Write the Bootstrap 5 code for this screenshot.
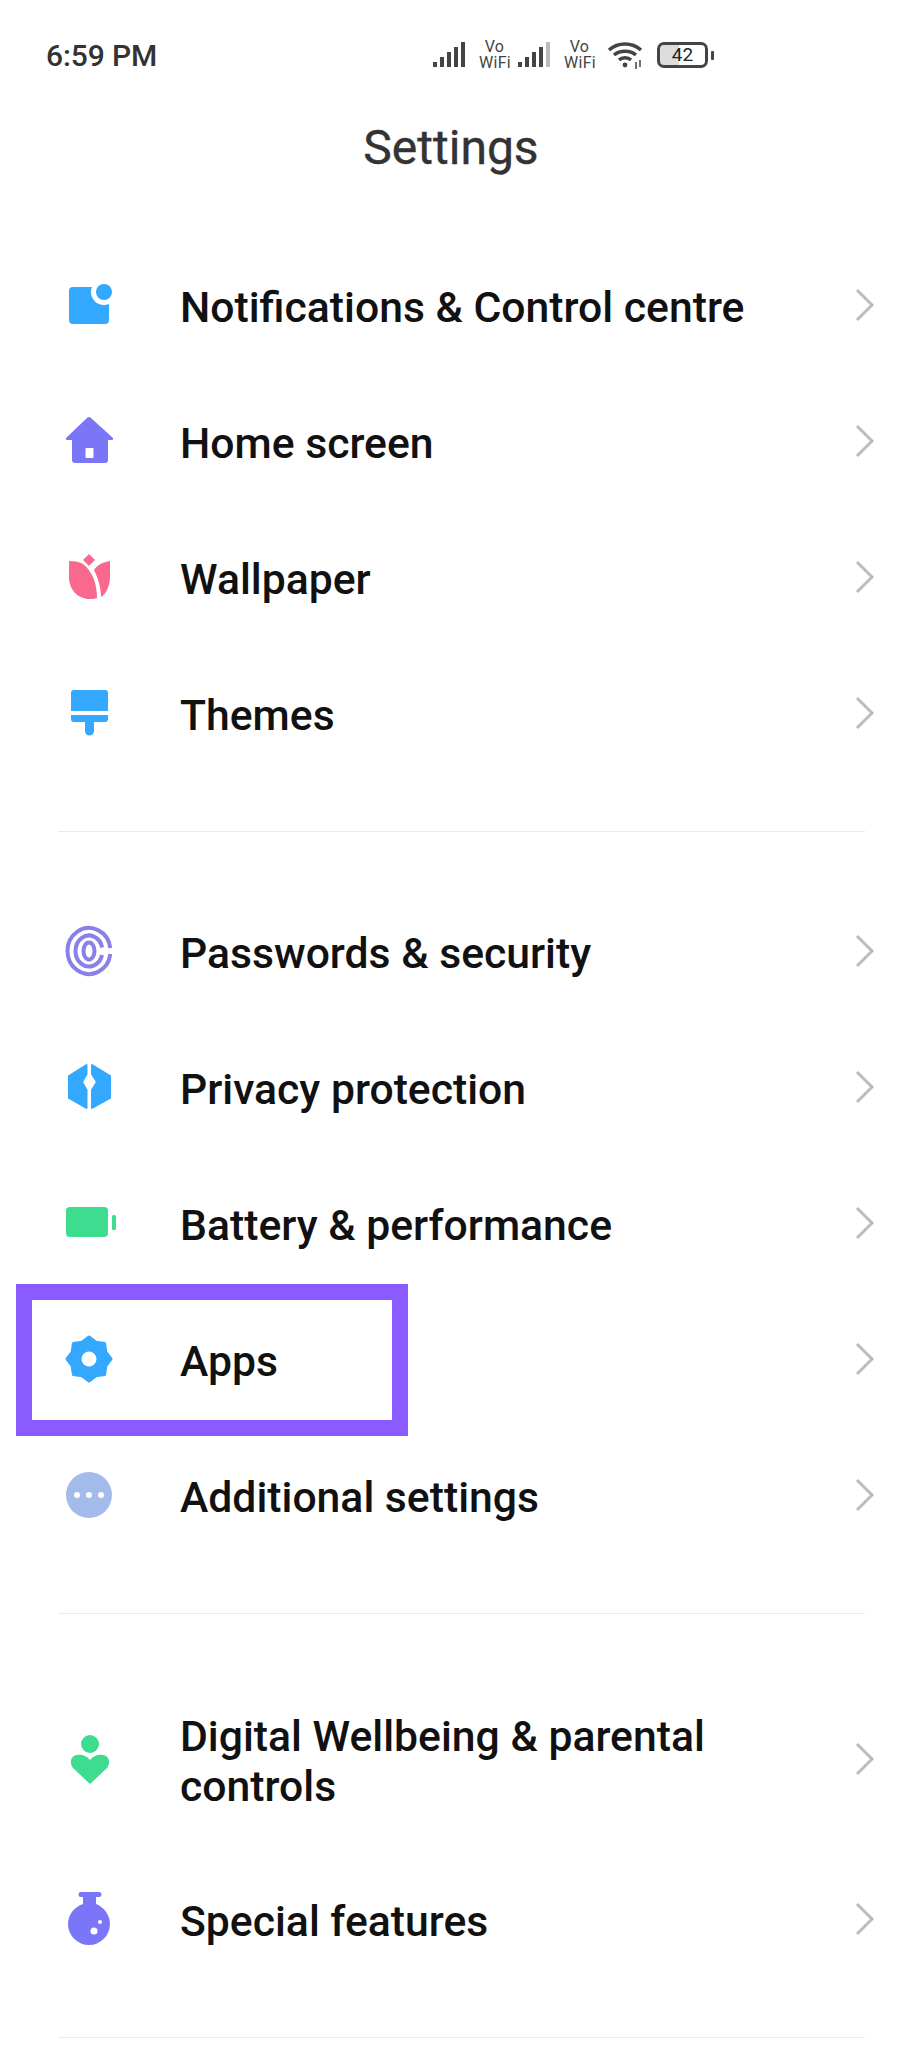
<!DOCTYPE html>
<html lang="en">
<head>
  <meta charset="UTF-8">
  <title>Settings</title>
  <link href="https://cdn.jsdelivr.net/npm/bootstrap@5.3.0/dist/css/bootstrap.min.css" rel="stylesheet">
  <style>
    html, body {
      height: 2048px;
      overflow: hidden;
    }
    body {
      background-color: #fff;
      font-family: Roboto, "Liberation Sans", sans-serif;
    }
    .status-strip {
      height: 110px;
      padding: 0 208px 0 46px;
      color: #333;
    }
    .clock {
      font-size: 30px;
      font-weight: 500;
      letter-spacing: -.1px;
    }
    .sig-bars {
      margin-right: 12px;
    }
    .vowifi {
      width: 31px;
      font-size: 16px;
      line-height: 16px;
      letter-spacing: .3px;
      text-align: center;
      color: #444;
    }
    .batt {
      width: 51px;
      height: 26px;
      border: 3px solid #444;
      border-radius: 7px;
      font-size: 19px;
      line-height: 20px;
      text-align: center;
      color: #222;
      background: linear-gradient(90deg, #ddd 42%, #fff 42%);
    }
    .batt-tip {
      width: 3px;
      height: 9px;
      background: #444;
      border-radius: 1px;
      margin-left: 3px;
    }
    .page-title {
      height: 76px;
      font-size: 48px;
      font-weight: 400;
      -webkit-text-stroke: .4px #333;
      line-height: 76px;
      color: #333;
      margin: 0;
    }
    .title-wrap {
      height: 129px;
      padding-right: 20px;
    }
    .set-row {
      display: flex;
      align-items: center;
      height: 136px;
      padding: 0 47px 0 59px;
      border: 0;
      background: transparent;
      font-size: 42.700px;
      font-weight: 500;
      line-height: 50px;
      color: #111;
    }
    .set-row.tall {
      height: 186px;
      padding-top: 2px;
    }
    .set-ico {
      width: 60px;
      height: 60px;
      flex: none;
      margin-right: 61px;
    }
    .set-label {
      flex: 1;
    }
    .chev {
      width: 20px;
      height: 34px;
      flex: none;
      margin-bottom: 4px;
    }
    .sect-rule {
      height: 1px;
      margin: 48px 57px 53px 58px;
      background: #eaeaea;
      border: 0;
      opacity: 1;
    }
    .apps-frame {
      position: absolute;
      left: 16px;
      top: -9px;
      width: 392px;
      height: 152px;
      border: 16px solid #8a5bff;
    }
  </style>
</head>
<body>
  <!-- status bar -->
  <div class="status-strip d-flex align-items-center justify-content-between">
    <span class="clock">6:59 PM</span>
    <div class="d-flex align-items-center">
      <svg class="sig-bars" width="34" height="26" viewBox="0 0 34 26" fill="#444"><rect x="0" y="20" width="4" height="5"/><rect x="7" y="15" width="4" height="10"/><rect x="14" y="10" width="4" height="15"/><rect x="21" y="5" width="4" height="20"/><rect x="28" y="0" width="4" height="25"/></svg>
      <div class="vowifi me-2">Vo<br>WiFi</div>
      <svg class="sig-bars" width="34" height="26" viewBox="0 0 34 26" fill="#444"><rect x="0" y="20" width="4" height="5"/><rect x="7" y="15" width="4" height="10"/><rect x="14" y="10" width="4" height="15"/><rect x="21" y="5" width="4" height="20"/><rect x="28" y="0" width="4" height="25" fill="#bbb"/></svg>
      <div class="vowifi me-2">Vo<br>WiFi</div>
      <svg class="ms-1 me-2" width="38" height="30" viewBox="0 0 38 30" fill="none" stroke="#444" stroke-width="3.4"><path d="M2 10 C11 2 25 2 34 10"/><path d="M7 15 C13 10 23 10 29 15"/><path d="M12 20 C15 17 21 17 24 20"/><circle cx="18" cy="25" r="2.4" fill="#444" stroke="none"/><path d="M29 22v7M33 20v7" stroke-width="1.5"/></svg>
      <div class="batt ms-1">42</div>
      <div class="batt-tip"></div>
    </div>
  </div>

  <div class="title-wrap text-center">
    <h1 class="page-title">Settings</h1>
  </div>

  <div class="list-group list-group-flush">
    <div class="list-group-item set-row">
      <svg class="set-ico" viewBox="0 0 60 60"><path d="M14 10H50V43a4 4 0 0 1-4 4H14a4 4 0 0 1-4-4V14a4 4 0 0 1 4-4Z" fill="#34a7fe"/><circle cx="45" cy="15" r="13" fill="#fff"/><circle cx="45" cy="15" r="8" fill="#34a7fe"/></svg>
      <span class="set-label">Notifications &amp; Control centre</span>
      <svg class="chev" viewBox="0 0 20 34"><path d="M2 2 L17 17 L2 32" fill="none" stroke="#bdbdbd" stroke-width="3"/></svg>
    </div>
    <div class="list-group-item set-row">
      <svg class="set-ico" viewBox="0 0 60 60"><path d="M28 5a3 3 0 0 1 4 0L54 25a1.300 1.300 0 0 1-1 2H49V47a3 3 0 0 1-3 3H16a3 3 0 0 1-3-3V27H8a1.300 1.300 0 0 1-1-2Z" fill="#7b76f7"/><rect x="26.500" y="35" width="8" height="10" rx="1" fill="#fff"/></svg>
      <span class="set-label">Home screen</span>
      <svg class="chev" viewBox="0 0 20 34"><path d="M2 2 L17 17 L2 32" fill="none" stroke="#bdbdbd" stroke-width="3"/></svg>
    </div>
    <div class="list-group-item set-row">
      <svg class="set-ico" viewBox="0 0 60 60" fill="#f9698e"><path d="M30 5l6 6-6 6-6-6Z"/><path d="M10 12C16 12 21 13 24 15 33 22 38 34 38 49 36 50 33 50 31 50 18 50 10 40 10 28Z"/><path d="M51 12V28C51 37 47 45 42 48 42 38 39 29 35 21 38 16 44 13 51 12Z"/></svg>
      <span class="set-label">Wallpaper</span>
      <svg class="chev" viewBox="0 0 20 34"><path d="M2 2 L17 17 L2 32" fill="none" stroke="#bdbdbd" stroke-width="3"/></svg>
    </div>
    <div class="list-group-item set-row">
      <svg class="set-ico" viewBox="0 0 60 60" fill="#34a7fe"><path d="M15 5H46a3 3 0 0 1 3 3V26H12V8a3 3 0 0 1 3-3Z"/><path d="M12 30H49V34a3 3 0 0 1-3 3H15a3 3 0 0 1-3-3Z"/><path d="M26 37H35V46a4.500 4.500 0 0 1-9 0Z"/></svg>
      <span class="set-label">Themes</span>
      <svg class="chev" viewBox="0 0 20 34"><path d="M2 2 L17 17 L2 32" fill="none" stroke="#bdbdbd" stroke-width="3"/></svg>
    </div>
  </div>

  <hr class="sect-rule">

  <div class="list-group list-group-flush">
    <div class="list-group-item set-row">
      <svg class="set-ico" viewBox="0 0 60 60" fill="none" stroke="#8a80e8" stroke-width="4"><path d="M51.300 25A21.500 23 0 1 0 51.300 31"/><path d="M43.150 24.500A13.500 15.500 0 1 0 43.040 32"/><ellipse cx="30" cy="28" rx="5.500" ry="8.500"/></svg>
      <span class="set-label">Passwords &amp; security</span>
      <svg class="chev" viewBox="0 0 20 34"><path d="M2 2 L17 17 L2 32" fill="none" stroke="#bdbdbd" stroke-width="3"/></svg>
    </div>
    <div class="list-group-item set-row">
      <svg class="set-ico" viewBox="0 0 60 60" fill="#34a7fe" stroke="#34a7fe" stroke-width="2" stroke-linejoin="round"><path d="M27.500 6V15L23 23 27.500 31V49L10 39V17Z"/><path d="M33 6V15L38 23 33 31V49L51 39V17Z"/></svg>
      <span class="set-label">Privacy protection</span>
      <svg class="chev" viewBox="0 0 20 34"><path d="M2 2 L17 17 L2 32" fill="none" stroke="#bdbdbd" stroke-width="3"/></svg>
    </div>
    <div class="list-group-item set-row">
      <svg class="set-ico" viewBox="0 0 60 60" fill="#3ddc8e"><rect x="7" y="12" width="42" height="30" rx="4"/><rect x="53" y="20" width="4" height="15" rx="1.500"/></svg>
      <span class="set-label">Battery &amp; performance</span>
      <svg class="chev" viewBox="0 0 20 34"><path d="M2 2 L17 17 L2 32" fill="none" stroke="#bdbdbd" stroke-width="3"/></svg>
    </div>
    <div class="list-group-item set-row position-relative">
      <svg class="set-ico" viewBox="0 0 60 60"><path d="M52 28 46.800 34.960 45.600 43.600 36.960 44.800 30 50 23.040 44.800 14.400 43.600 13.200 34.960 8 28 13.200 21.040 14.400 12.400 23.040 11.200 30 6 36.960 11.200 45.600 12.400 46.800 21.040Z" fill="#34a7fe" stroke="#34a7fe" stroke-width="3" stroke-linejoin="round"/><circle cx="30" cy="28" r="7.500" fill="#fff"/></svg>
      <span class="set-label">Apps</span>
      <svg class="chev" viewBox="0 0 20 34"><path d="M2 2 L17 17 L2 32" fill="none" stroke="#bdbdbd" stroke-width="3"/></svg>
      <div class="apps-frame"></div>
    </div>
    <div class="list-group-item set-row">
      <svg class="set-ico" viewBox="0 0 60 60"><circle cx="30" cy="28" r="23" fill="#a3bbea"/><circle cx="18" cy="28" r="3" fill="#fff"/><circle cx="30" cy="28" r="3" fill="#fff"/><circle cx="42" cy="28" r="3" fill="#fff"/></svg>
      <span class="set-label">Additional settings</span>
      <svg class="chev" viewBox="0 0 20 34"><path d="M2 2 L17 17 L2 32" fill="none" stroke="#bdbdbd" stroke-width="3"/></svg>
    </div>
  </div>

  <hr class="sect-rule">

  <div class="list-group list-group-flush">
    <div class="list-group-item set-row tall">
      <svg class="set-ico" viewBox="0 0 60 60" fill="#3ddc8e"><circle cx="31" cy="13" r="9"/><path d="M31 53L15 38C10 33 11 25 18 24 23 23 28 25 31 29 34 25 39 23 44 24 51 25 52 33 47 38Z"/></svg>
      <span class="set-label">Digital Wellbeing &amp; parental<br>controls</span>
      <svg class="chev" viewBox="0 0 20 34"><path d="M2 2 L17 17 L2 32" fill="none" stroke="#bdbdbd" stroke-width="3"/></svg>
    </div>
    <div class="list-group-item set-row">
      <svg class="set-ico" viewBox="0 0 60 60"><path d="M22 1H40a2.500 2.500 0 0 1 0 5H37V13C45 16 51 24 51 33A21 21 0 0 1 9 33C9 24 15 16 24 13V6H22a2.500 2.500 0 0 1 0-5Z" fill="#7b76f7"/><circle cx="35" cy="40" r="3.500" fill="#fff"/><circle cx="41" cy="31" r="2" fill="#fff"/></svg>
      <span class="set-label">Special features</span>
      <svg class="chev" viewBox="0 0 20 34"><path d="M2 2 L17 17 L2 32" fill="none" stroke="#bdbdbd" stroke-width="3"/></svg>
    </div>
  </div>

  <hr class="sect-rule">

  <script src="https://cdn.jsdelivr.net/npm/bootstrap@5.3.0/dist/js/bootstrap.bundle.min.js"></script>
</body>
</html>
